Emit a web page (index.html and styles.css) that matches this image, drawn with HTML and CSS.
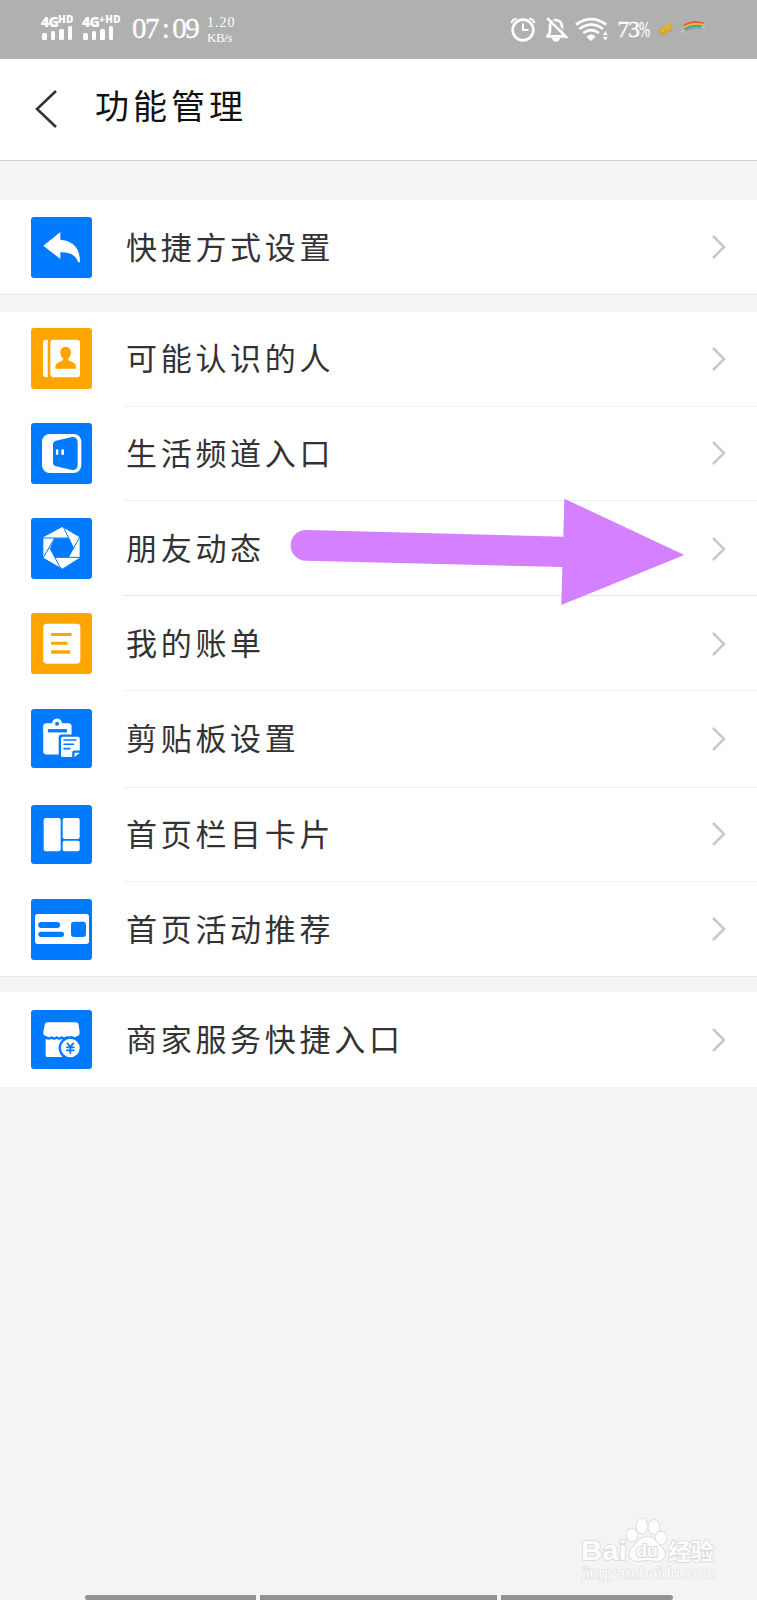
FILE: index.html
```html
<!DOCTYPE html>
<html lang="zh">
<head>
    <meta charset="UTF-8">
    <title>功能管理</title>
    <link rel="stylesheet" href="styles.css">
</head>
<body>
    <div class="status-bar">
        <div class="signal">
            <div class="net">4G<span>HD</span></div>
            <div class="bars"><i></i><i></i><i></i><i></i></div>
        </div>
        <div class="signal signal-plus">
            <div class="net">4G<span>+HD</span></div>
            <div class="bars"><i></i><i></i><i></i><i></i></div>
        </div>
        <div class="time">07<b>:</b>09</div>
        <div class="speed"><div>1.20</div><div>KB/s</div></div>
        <svg class="alarm" viewBox="60 48 78 80">
            <g fill="none" stroke="#fff" stroke-linecap="round">
                <circle cx="99" cy="90" r="31" stroke-width="8"/>
                <path d="M99 73v17h14" stroke-width="6"/>
                <path d="M65 67q3-9 13-11M133 67q-3-9-13-11" stroke-width="6"/>
            </g>
        </svg>
        <svg class="bell" viewBox="166 48 70 80">
            <path d="M173 109V108q8-6 8-16V80q0-18 17-20 19 2 19 20v13q0 10 8 16z" fill="none" stroke="#fff" stroke-width="8" stroke-linejoin="round"/>
            <path d="M187 114h24q-2 11-12 11t-12-11z" fill="#fff"/>
            <path d="M179 51l59 58" stroke="#b0b0b0" stroke-width="5"/>
            <path d="M174 56l57 56" stroke="#fff" stroke-width="7" stroke-linecap="round"/>
        </svg>
        <svg class="wifi" viewBox="256 48 102 80">
            <g fill="none" stroke="#fff" stroke-width="8">
                <path d="M259 74q45-34 91 0"/>
                <path d="M269 87q36-26 71 0"/>
                <path d="M281 99q24-17 47 0"/>
            </g>
            <path d="M290 110q15-15 28 0l-14 13z" fill="#fff"/>
            <path d="M340 105l7-12 7 12zM340 110h14l-7 12z" fill="#fff"/>
        </svg>
        <div class="battery">73<b>%</b></div>
        <svg class="charge" viewBox="502 62 52 52">
            <path d="M505 90l12-12 4 3 18-15 11 10-3 19-13 2-15 13-12-8z" fill="#c9a53f" opacity=".75"/>
            <path d="M511 91l10-9 8 5-8 13zM525 80l13-11 7 10-11 14z" fill="#f3b21b"/>
            <path d="M515 103l27-25" stroke="#a99b70" stroke-width="2"/>
        </svg>
        <svg class="rainbow" viewBox="570 60 78 44">
            <g fill="none" stroke-width="6">
                <path d="M581 78q24-18 60-7" stroke="#ed5534"/>
                <path d="M581 83q25-17 60-8" stroke="#f1b54a"/>
                <path d="M583 88q25-16 57-9" stroke="#3fae6c"/>
                <path d="M588 92q21-12 44-7" stroke="#7b9dcd" stroke-width="4"/>
            </g>
            <ellipse cx="578" cy="94" rx="5" ry="6" fill="#c4c4c4"/>
            <ellipse cx="640" cy="80" rx="5" ry="4" fill="#c4c4c4"/>
        </svg>
    </div>

    <div class="header">
        <svg class="back" viewBox="0 0 24 40"><path d="M22 2L3 20l19 18"/></svg>
        <h1>功能管理</h1>
    </div>

    <div class="group first">
        <div class="row">
            <svg class="icon" viewBox="0 0 183 183">
                <path d="M37 86L88 45v24c34 1 60 22 59 67h-5c-7-20-24-31-54-30v20z"/>
            </svg>
            <span>快捷方式设置</span>
            <svg class="more" viewBox="0 0 16 26"><path d="M2 2l11 11L2 24"/></svg>
        </div>
    </div>

    <div class="group main">
        <div class="row up">
            <svg class="icon orange" viewBox="0 0 183 183">
                <path d="M50 35v113h-5q-9 0-9-9V44q0-9 9-9z"/>
                <rect x="58" y="35" width="89" height="113" rx="9"/>
                <path class="cut" d="M104 56c11 0 17 9 16 19-1 8-5 13-8 16v6c10 5 23 8 23 21v4H73v-4c0-13 13-16 23-21v-6c-4-3-8-8-8-16-1-10 5-19 16-19z"/>
            </svg>
            <span>可能认识的人</span>
            <svg class="more" viewBox="0 0 16 26"><path d="M2 2l11 11L2 24"/></svg>
        </div>
        <div class="row short up">
            <svg class="icon" viewBox="0 0 183 183">
                <rect x="33" y="33" width="118" height="117" rx="23"/>
                <path class="cut" d="M75 53l48-11q17-1 17 17v65q0 19-17 17l-48-11q-9-3-9-11V64q0-8 9-11z"/>
                <rect x="75" y="79" width="7" height="17" rx="3"/>
                <rect x="91" y="79" width="8" height="17" rx="3"/>
            </svg>
            <span>生活频道入口</span>
            <svg class="more" viewBox="0 0 16 26"><path d="M2 2l11 11L2 24"/></svg>
        </div>
        <div class="row dark-line">
            <svg class="icon" viewBox="0 0 183 183">
                <path d="M94 27l52 31v61l-52 33-57-33V58z"/>
                <path class="cut" d="M71 61h42l15 30-16 27H72L57 91z"/>
                <path class="seam" d="M35 60h78M96 25l32 66M147 56l-35 62M148 118H72M90 153L57 91M36 120l35-60"/>
            </svg>
            <span>朋友动态</span>
            <svg class="more" viewBox="0 0 16 26"><path d="M2 2l11 11L2 24"/></svg>
            <svg class="pointer" viewBox="0 0 1461 420">
                <path d="M107 150L880 170 883 56l360 169-369 150 3-114-768-19a46 46 0 0 1-2-92z"/>
            </svg>
        </div>
        <div class="row">
            <svg class="icon orange" viewBox="0 0 183 183">
                <rect x="37" y="32" width="111" height="120" rx="10"/>
                <rect class="cut" x="60" y="60" width="62" height="9" rx="3"/>
                <rect class="cut" x="60" y="86" width="50" height="9" rx="3"/>
                <rect class="cut" x="60" y="112" width="58" height="10" rx="3"/>
            </svg>
            <span>我的账单</span>
            <svg class="more" viewBox="0 0 16 26"><path d="M2 2l11 11L2 24"/></svg>
        </div>
        <div class="row tall up">
            <svg class="icon low" viewBox="0 0 183 179">
                <rect x="36" y="43" width="86" height="95" rx="10"/>
                <circle cx="78" cy="44" r="15"/>
                <circle class="cut" cx="78" cy="45" r="6"/>
                <rect class="cut" x="50" y="61" width="58" height="10"/>
                <rect class="cut" x="83" y="77" width="70" height="76" rx="9"/>
                <path d="M96 84h45q6 0 6 6v36h-17q-6 0-6 6v14H96q-6 0-6-6V90q0-6 6-6z"/>
                <path d="M131 146v-13h16z"/>
                <path class="lines" d="M99 94h36M99 107h29M99 120h18"/>
            </svg>
            <span>剪贴板设置</span>
            <svg class="more" viewBox="0 0 16 26"><path d="M2 2l11 11L2 24"/></svg>
        </div>
        <div class="row short up">
            <svg class="icon low" viewBox="0 0 183 177">
                <rect x="38" y="39" width="51" height="100" rx="6"/>
                <rect x="95" y="39" width="51" height="63" rx="6"/>
                <rect x="95" y="107" width="51" height="32" rx="6"/>
            </svg>
            <span>首页栏目卡片</span>
            <svg class="more" viewBox="0 0 16 26"><path d="M2 2l11 11L2 24"/></svg>
        </div>
        <div class="row">
            <svg class="icon" viewBox="0 0 183 183">
                <rect x="12" y="45" width="162" height="90" rx="8"/>
                <rect class="cut" x="22" y="69" width="65" height="18" rx="8"/>
                <rect class="cut" x="22" y="98" width="77" height="16" rx="8"/>
                <rect class="cut" x="120" y="68" width="45" height="46" rx="9"/>
            </svg>
            <span>首页活动推荐</span>
            <svg class="more" viewBox="0 0 16 26"><path d="M2 2l11 11L2 24"/></svg>
        </div>
    </div>

    <div class="group last">
        <div class="row">
            <svg class="icon low" viewBox="0 0 183 177">
                <path d="M50 37h84q8 0 9 8l3 22q0 11-8 11-8 8-16 0-5 8-15 0-7 8-15 0-8 8-15 0-8 8-16 0-7 8-15 0-10 0-9-11l4-22q1-8 9-8z"/>
                <path d="M44 87q9 5 17 0 8 5 16 0 8 5 15 0 8 5 15 0l25 3v51H48q-4 0-4-4z"/>
                <circle class="cut" cx="118" cy="114" r="35"/>
                <circle cx="118" cy="114" r="28"/>
                <path class="lines" d="M109 100l9 10 9-10M118 110v20M107 112h22M107 121h22"/>
            </svg>
            <span>商家服务快捷入口</span>
            <svg class="more" viewBox="0 0 16 26"><path d="M2 2l11 11L2 24"/></svg>
        </div>
    </div>

    <svg class="watermark" viewBox="0 0 160 80">
        <text class="logo" x="11" y="50" font-size="28" textLength="46" lengthAdjust="spacingAndGlyphs">Bai</text>
        <g>
            <ellipse cx="62" cy="25" rx="5.5" ry="6.5"/>
            <ellipse cx="72" cy="16" rx="5.5" ry="7.5"/>
            <ellipse cx="84" cy="17" rx="5.5" ry="7"/>
            <ellipse cx="91" cy="28" rx="5.5" ry="6.5"/>
            <path d="M77 27c9 0 11 8 16 12 4 4 2 12-6 12-4 0-7-1-10-1s-6 1-10 1c-8 0-9-8-6-12 5-4 7-12 16-12z"/>
        </g>
        <text class="du" x="66" y="47" font-size="19" textLength="22" lengthAdjust="spacingAndGlyphs">du</text>
        <text class="logo cn" x="98" y="50" font-size="23" textLength="46" lengthAdjust="spacingAndGlyphs">经验</text>
        <text class="site" x="12" y="68" font-size="14" textLength="134" lengthAdjust="spacingAndGlyphs">jingyan.baidu.com</text>
    </svg>

    <div class="nav-bar"><i></i><i></i><i></i></div>
</body>
</html>
```

FILE: styles.css
```css
* {
    box-sizing: border-box;
}
body {
    margin: 0;
    height: 1600px;
    position: relative;
    display: flex;
    flex-direction: column;
    overflow: hidden;
    background-color: #f4f4f4;
    font-family: "Noto Sans CJK SC", sans-serif;
    color: #333;
}

/* 状态栏 */
.status-bar {
    height: 59px;
    flex: none;
    display: flex;
    align-items: flex-start;
    padding: 15px 0 0 41px;
    background-color: #b0b0b0;
    color: #fff;
    font-family: "Liberation Serif", serif;
}
.signal {
    width: 41px;
    flex: none;
}
.signal-plus {
    width: 50px;
}
.net {
    height: 11px;
    display: flex;
    font: 800 14px/13px "Open Sans", sans-serif;
    letter-spacing: -0.8px;
    white-space: nowrap;
}
.net span {
    font-size: 10px;
    line-height: 8px;
    letter-spacing: 0.4px;
}
.bars {
    display: flex;
    align-items: flex-end;
    gap: 4px;
    height: 14px;
    padding-left: 1px;
}
.bars i {
    width: 4.5px;
    height: 7px;
    border-radius: 1.5px;
    background-color: #fff;
}
.bars i:nth-child(2) {
    height: 9px;
}
.bars i:nth-child(3) {
    height: 11px;
}
.bars i:nth-child(4) {
    height: 14px;
}
.time {
    width: 75px;
    flex: none;
    font-size: 29px;
    line-height: 29px;
    letter-spacing: -1.4px;
    white-space: nowrap;
    margin-top: -1px;
    -webkit-text-stroke: 0.3px #fff;
}
.time b {
    display: inline-block;
    width: 14px;
    text-align: center;
    font-weight: normal;
}
.speed {
    width: 303px;
    flex: none;
    font-size: 14px;
    line-height: 14px;
}
.speed div {
    height: 15px;
}
.speed div:first-child {
    letter-spacing: 1px;
    margin-top: 1px;
}
.speed div:last-child {
    font-size: 13px;
    letter-spacing: -0.4px;
}
.status-bar svg {
    flex: none;
    margin-top: 1px;
}
.alarm {
    width: 26px;
    height: 26.7px;
    margin-right: 9px;
}
.bell {
    width: 23.3px;
    height: 26.7px;
    margin-right: 7px;
}
.wifi {
    width: 34px;
    height: 26.7px;
    margin-right: 8px;
}
.battery {
    width: 40px;
    flex: none;
    font-size: 24px;
    line-height: 28px;
    letter-spacing: -1.2px;
    white-space: nowrap;
    -webkit-text-stroke: 0.3px #fff;
}
.battery b {
    display: inline-block;
    font-weight: normal;
    transform: scaleX(0.56);
    transform-origin: left;
}
.status-bar .charge {
    width: 17.3px;
    height: 17.3px;
    margin: 6px 5px 0 0;
}
.status-bar .rainbow {
    width: 26px;
    height: 14.7px;
    margin-top: 5px;
}

/* 标题 */
.header {
    height: 102px;
    flex: none;
    display: flex;
    align-items: center;
    padding: 0 34px 2px;
    background-color: #fff;
    border-bottom: 1px solid #cfd1d0;
}
.back {
    width: 24px;
    height: 40px;
    margin-right: 37px;
}
.back path {
    fill: none;
    stroke: #333;
    stroke-width: 2.6;
}
h1 {
    margin: 0 0 7px;
    font-size: 34px;
    line-height: 50px;
    font-weight: 400;
    letter-spacing: 4px;
    color: #111;
}

/* 列表 */
.group {
    flex: none;
    background-color: #fff;
    border-bottom: 1px solid #e8e8e8;
}
.first {
    margin-top: 39px;
}
.main {
    margin-top: 17px;
}
.last {
    margin-top: 15px;
    border-bottom: 0;
}
.row {
    position: relative;
    height: 95px;
    display: flex;
    align-items: center;
    padding: 0 30px 0 31px;
}
.first .row,
.main .row:last-child {
    height: 94px;
}
.row.short {
    height: 94px;
}
.row.tall {
    height: 97px;
}
.row.up {
    padding-bottom: 2px;
}
.row:not(:last-child)::after {
    content: "";
    position: absolute;
    left: 124px;
    right: 0;
    bottom: 0;
    height: 1px;
    background-color: #efefef;
}
.row.dark-line::after {
    background-color: #e2e2e2;
}
.row span {
    flex: 1;
    padding: 0 0 3px 34px;
    font-size: 31px;
    line-height: 46px;
    letter-spacing: 3.7px;
    white-space: nowrap;
}
.icon {
    width: 61px;
    height: 61px;
    border-radius: 3px;
    background-color: #007aff;
    fill: #fff;
}
.icon.low {
    height: 59px;
}
.icon.orange {
    background-color: #ffa500;
}
.icon .cut {
    fill: #007aff;
}
.icon.orange .cut {
    fill: #ffa500;
}
.icon .seam {
    fill: none;
    stroke: #007aff;
    stroke-width: 3;
}
.icon .lines {
    fill: none;
    stroke: #007aff;
    stroke-width: 5;
    stroke-linecap: round;
}
.more {
    width: 16px;
    height: 26px;
}
.more path {
    fill: none;
    stroke: #c8c8c8;
    stroke-width: 2.5;
}
.pointer {
    position: absolute;
    z-index: 1;
    left: 270px;
    top: -21px;
    width: 487px;
    height: 140px;
    fill: #d580ff;
}

/* 水印 */
.watermark {
    position: absolute;
    left: 570px;
    top: 1510px;
    width: 160px;
    height: 80px;
    fill: #fdfdfd;
    stroke: #d8d8d8;
    stroke-width: 1.6;
    paint-order: stroke;
}
.logo,
.du {
    font-family: "Liberation Sans", sans-serif;
    font-weight: 700;
}
.cn {
    font-family: "Noto Sans CJK SC", sans-serif;
}
.du {
    stroke-width: 2;
}
.site {
    font-family: "Liberation Sans", sans-serif;
    stroke: #e2e2e2;
    stroke-width: 1.4;
}

/* 底部导航条 */
.nav-bar {
    display: flex;
    gap: 4px;
    height: 5px;
    margin: auto 84.5px 0;
}
.nav-bar i {
    width: 171.5px;
    background-color: #929292;
    border-radius: 3px 0 0 3px;
}
.nav-bar i:nth-child(2) {
    width: 237px;
    border-radius: 0;
}
.nav-bar i:last-child {
    border-radius: 0 3px 3px 0;
}
```
